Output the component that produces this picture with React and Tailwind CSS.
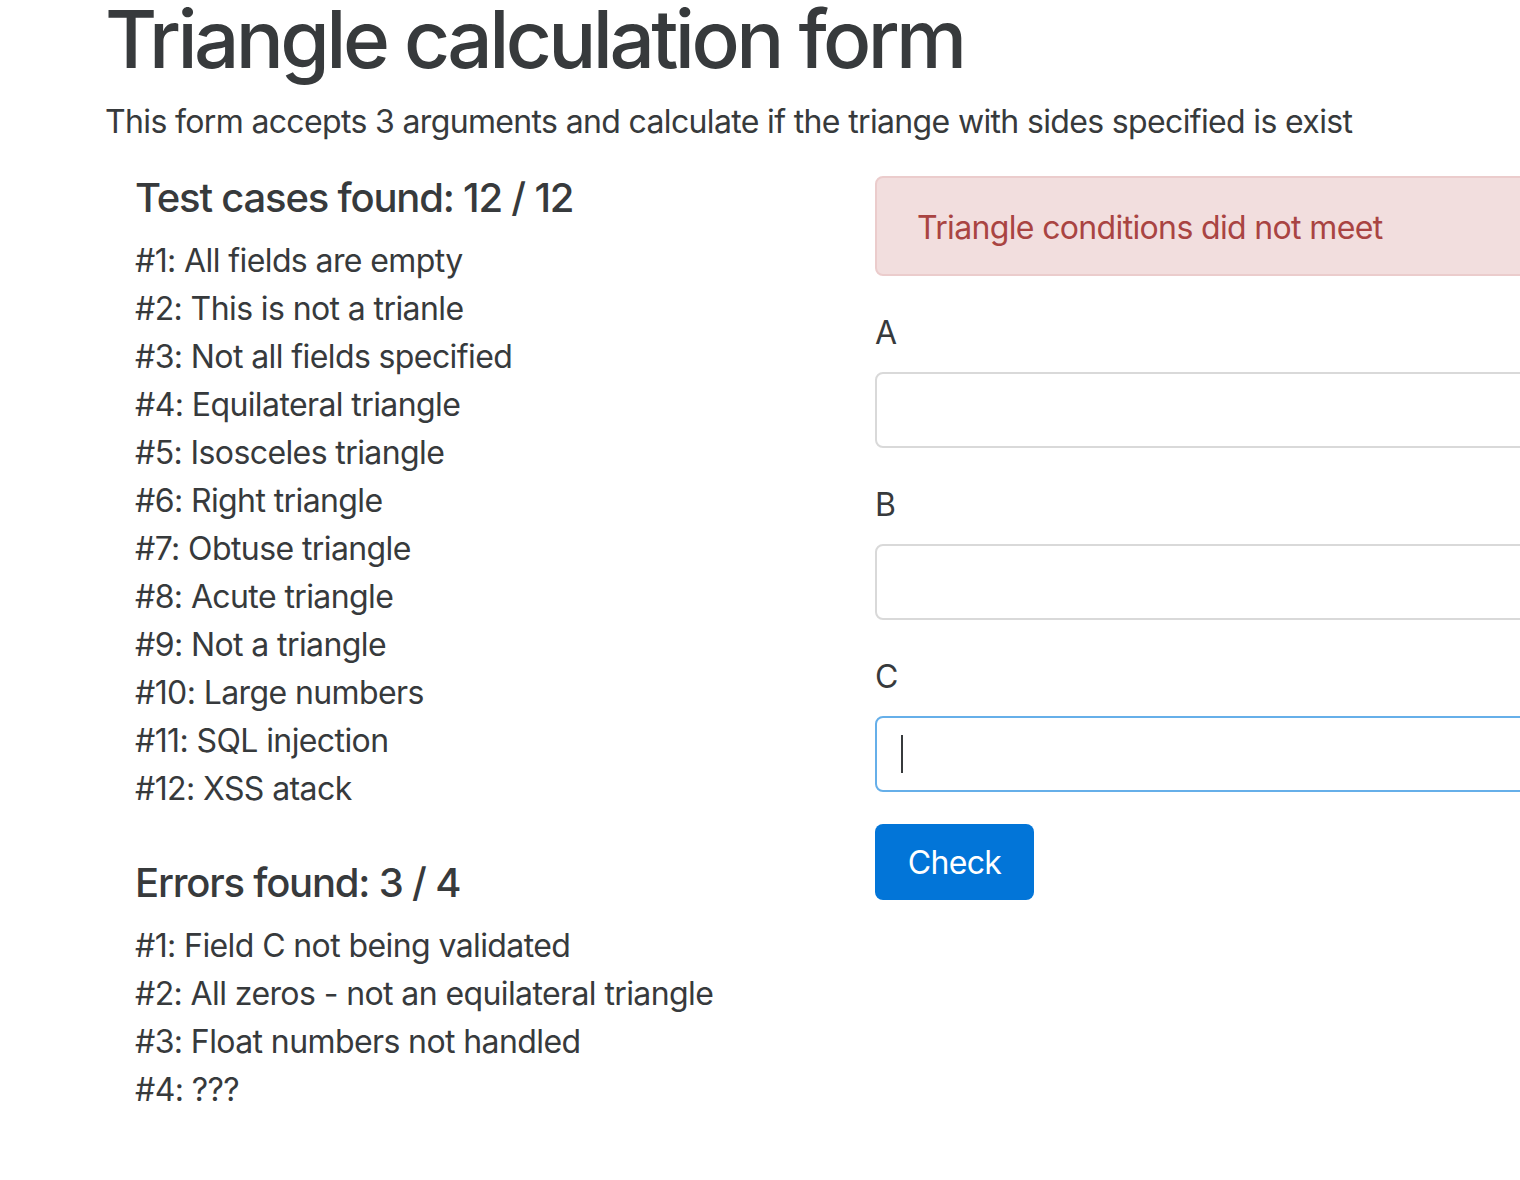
export default function App() {
  const tests = [
    "#1: All fields are empty",
    "#2: This is not a trianle",
    "#3: Not all fields specified",
    "#4: Equilateral triangle",
    "#5: Isosceles triangle",
    "#6: Right triangle",
    "#7: Obtuse triangle",
    "#8: Acute triangle",
    "#9: Not a triangle",
    "#10: Large numbers",
    "#11: SQL injection",
    "#12: XSS atack",
  ];
  const errors = [
    "#1: Field C not being validated",
    "#2: All zeros - not an equilateral triangle",
    "#3: Float numbers not handled",
    "#4: ???",
  ];
  return (
    <div className="w-[1520px] h-[1180px] overflow-hidden bg-white text-[#373a3c] font-['Inter','Liberation_Sans',sans-serif]">
      <div className="w-[1480px] ml-[105px]">
        <h1 className="mb-[20px] text-[80px] leading-[78px] font-medium tracking-[-3.6px]">Triangle calculation form</h1>
        <p className="mb-[30px] text-[32px] leading-[48px] tracking-[-0.65px]">
          This form accepts 3 arguments and calculate if the triange with sides specified is exist
        </p>
        <div className="flex">
          <div className="w-[740px] px-[30px] tracking-[-0.6px]">
            <h5 className="mb-[17px] text-[40px] leading-[44px] font-medium tracking-[-1.2px]">Test cases found: 12 / 12</h5>
            <ul className="mb-[48px]">
              {tests.map((t) => (
                <li key={t} className="text-[32px] leading-[48px]">{t}</li>
              ))}
            </ul>
            <h5 className="mb-[17px] text-[40px] leading-[44px] font-medium tracking-[-1.2px]">Errors found: 3 / 4</h5>
            <ul>
              {errors.map((t) => (
                <li key={t} className="text-[32px] leading-[48px]">{t}</li>
              ))}
            </ul>
          </div>
          <div className="w-[740px] px-[30px] tracking-[-0.65px]">
            <div className="mb-[32px] rounded-[8px] border-2 border-[#ebcccc] bg-[#f2dede] px-[40px] pt-[26px] pb-[22px] text-[32px] leading-[48px] text-[#a94442]">
              Triangle conditions did not meet
            </div>
            {["A", "B"].map((l) => (
              <div key={l} className="mb-[32px]">
                <div className="mb-[16px] pt-[2px] text-[32px] leading-[46px]">{l}</div>
                <div className="h-[76px] rounded-[8px] border-2 border-[#d9d9d9] bg-white"></div>
              </div>
            ))}
            <div className="mb-[32px]">
              <div className="mb-[16px] pt-[2px] text-[32px] leading-[46px]">C</div>
              <div className="flex h-[76px] items-center rounded-[8px] border-2 border-[#66afe9] bg-white pl-[24px]">
                <div className="h-[38px] w-[2px] bg-[#373a3c]"></div>
              </div>
            </div>
            <button className="flex h-[76px] w-[159px] items-center justify-center rounded-[8px] bg-[#0275d8] pt-[2px] text-[32px] leading-[48px] text-white">
              Check
            </button>
          </div>
        </div>
      </div>
    </div>
  );
}
